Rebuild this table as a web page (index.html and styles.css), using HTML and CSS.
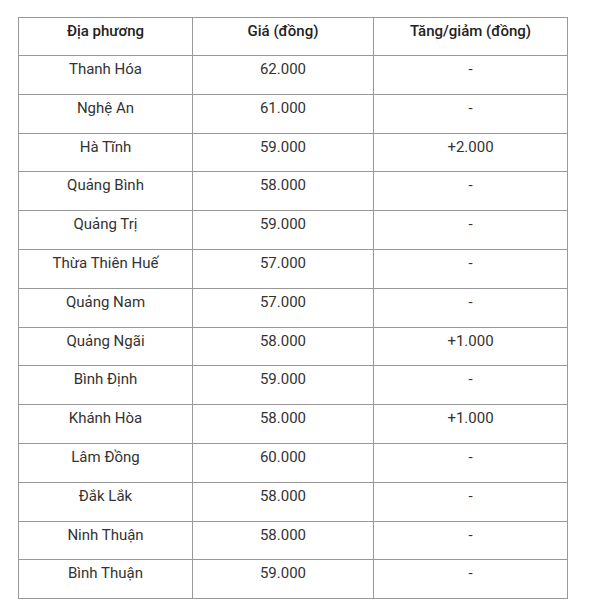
FILE: index.html
```html
<!DOCTYPE html>
<html lang="vi">
<head>
<meta charset="utf-8">
<link rel="stylesheet" href="styles.css">
</head>
<body>
<div class="wrap">
<table class="price">
<colgroup><col class="c1"><col class="c2"><col class="c3"></colgroup>
<thead>
<tr><th>Địa phương</th><th>Giá (đồng)</th><th>Tăng/giảm (đồng)</th></tr>
</thead>
<tbody>
<tr><td>Thanh Hóa</td><td>62.000</td><td>-</td></tr>
<tr><td>Nghệ An</td><td>61.000</td><td>-</td></tr>
<tr><td>Hà Tĩnh</td><td>59.000</td><td>+2.000</td></tr>
<tr><td>Quảng Bình</td><td>58.000</td><td>-</td></tr>
<tr><td>Quảng Trị</td><td>59.000</td><td>-</td></tr>
<tr><td>Thừa Thiên Huế</td><td>57.000</td><td>-</td></tr>
<tr><td>Quảng Nam</td><td>57.000</td><td>-</td></tr>
<tr><td>Quảng Ngãi</td><td>58.000</td><td>+1.000</td></tr>
<tr><td>Bình Định</td><td>59.000</td><td>-</td></tr>
<tr><td>Khánh Hòa</td><td>58.000</td><td>+1.000</td></tr>
<tr><td>Lâm Đồng</td><td>60.000</td><td>-</td></tr>
<tr><td>Đắk Lắk</td><td>58.000</td><td>-</td></tr>
<tr><td>Ninh Thuận</td><td>58.000</td><td>-</td></tr>
<tr><td>Bình Thuận</td><td>59.000</td><td>-</td></tr>
</tbody>
</table>
</div>
</body>
</html>
```
FILE: styles.css
```css
html, body {
  margin: 0;
  padding: 0;
  background: #fff;
}
.wrap {
  padding: 17px 0 0 18px;
}
.price {
  border-collapse: collapse;
  table-layout: fixed;
  width: 549px;
  font-family: Roboto, "Noto Sans", sans-serif;
  font-size: 15px;
  color: #333;
}
.c1 { width: 174px; }
.c2 { width: 181px; }
.c3 { width: 194px; }
.price th,
.price td {
  border: 1px solid #999;
  padding: 2px 5px 13.8px;
  line-height: 22px;
  text-align: center;
  vertical-align: top;
}
.price th {
  font-weight: 500;
  color: #222;
  padding-bottom: 13px;
}
```
